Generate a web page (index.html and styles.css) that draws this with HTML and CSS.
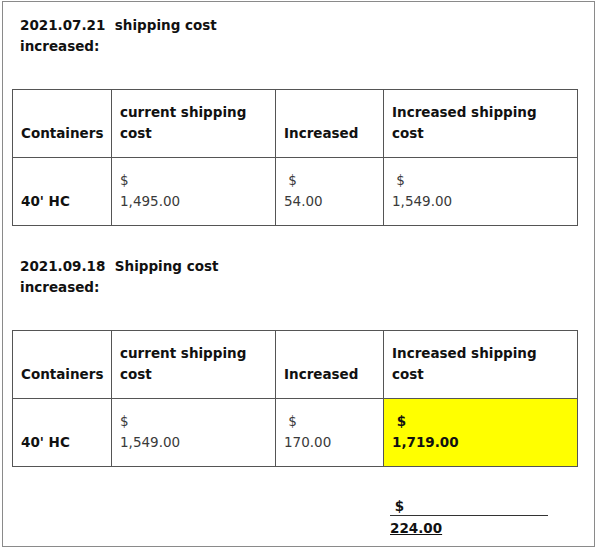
FILE: index.html
```html
<!DOCTYPE html>
<html>
<head>
<meta charset="utf-8">
<link rel="stylesheet" href="styles.css">
</head>
<body>
<div class="frame">
  <div class="title">2021.07.21  shipping cost increased:</div>
  <table class="cost">
    <colgroup><col class="c1"><col class="c2"><col class="c3"><col class="c4"></colgroup>
    <tr class="head">
      <td>Containers</td>
      <td>current shipping cost</td>
      <td>Increased</td>
      <td>Increased shipping cost</td>
    </tr>
    <tr class="data">
      <td class="bold">40' HC</td>
      <td>$<br>1,495.00</td>
      <td>&nbsp;$<br>54.00</td>
      <td>&nbsp;$<br>1,549.00</td>
    </tr>
  </table>
  <div class="title second">2021.09.18  Shipping cost increased:</div>
  <table class="cost">
    <colgroup><col class="c1"><col class="c2"><col class="c3"><col class="c4"></colgroup>
    <tr class="head">
      <td>Containers</td>
      <td>current shipping cost</td>
      <td>Increased</td>
      <td>Increased shipping cost</td>
    </tr>
    <tr class="data">
      <td class="bold">40' HC</td>
      <td>$<br>1,549.00</td>
      <td>&nbsp;$<br>170.00</td>
      <td class="bold hl">&nbsp;$<br>1,719.00</td>
    </tr>
  </table>
  <div class="total">
    <div class="total-line">&nbsp;$</div>
    <div class="total-val">224.00</div>
  </div>
</div>
</body>
</html>
```
FILE: styles.css
```css
html, body {
  margin: 0;
  padding: 0;
  background: #fff;
}
body {
  font-family: "DejaVu Sans", Verdana, sans-serif;
  font-size: 13.5px;
  color: #111;
}
.frame {
  margin: 1px 0 0 2px;
  width: 591px;
  height: 531px;
  border: 1px solid #8a8a8a;
  padding-top: 13px;
  box-sizing: content-box;
}
.title {
  font-weight: bold;
  line-height: 21px;
  width: 240px;
  white-space: pre-wrap;
  margin-left: 17px;
  margin-bottom: 32px;
}
.title.second {
  margin-top: 30px;
}
.cost {
  margin-left: 9px;
  border-collapse: collapse;
  table-layout: fixed;
  width: 565px;
}
.c1 { width: 99px; }
.c2 { width: 164px; }
.c3 { width: 108px; }
.c4 { width: 194px; }
.cost td {
  border: 1px solid #555;
  padding: 12px 8px 13px 8px;
  line-height: 21px;
  vertical-align: bottom;
  color: #3a3a3a;
}
.cost .head td {
  font-weight: bold;
  color: #111;
}
.cost td.bold {
  font-weight: bold;
  color: #111;
}
.cost td.hl {
  background: #ffff00;
}
.total {
  margin-top: 30px;
  padding-left: 387px;
  font-weight: bold;
  line-height: 21px;
  color: #111;
}
.total-line {
  width: 158px;
  border-bottom: 1px solid #333;
  line-height: 18px;
  margin-bottom: 2px;
}
.total-val {
  display: inline-block;
  text-decoration: underline;
}
```
